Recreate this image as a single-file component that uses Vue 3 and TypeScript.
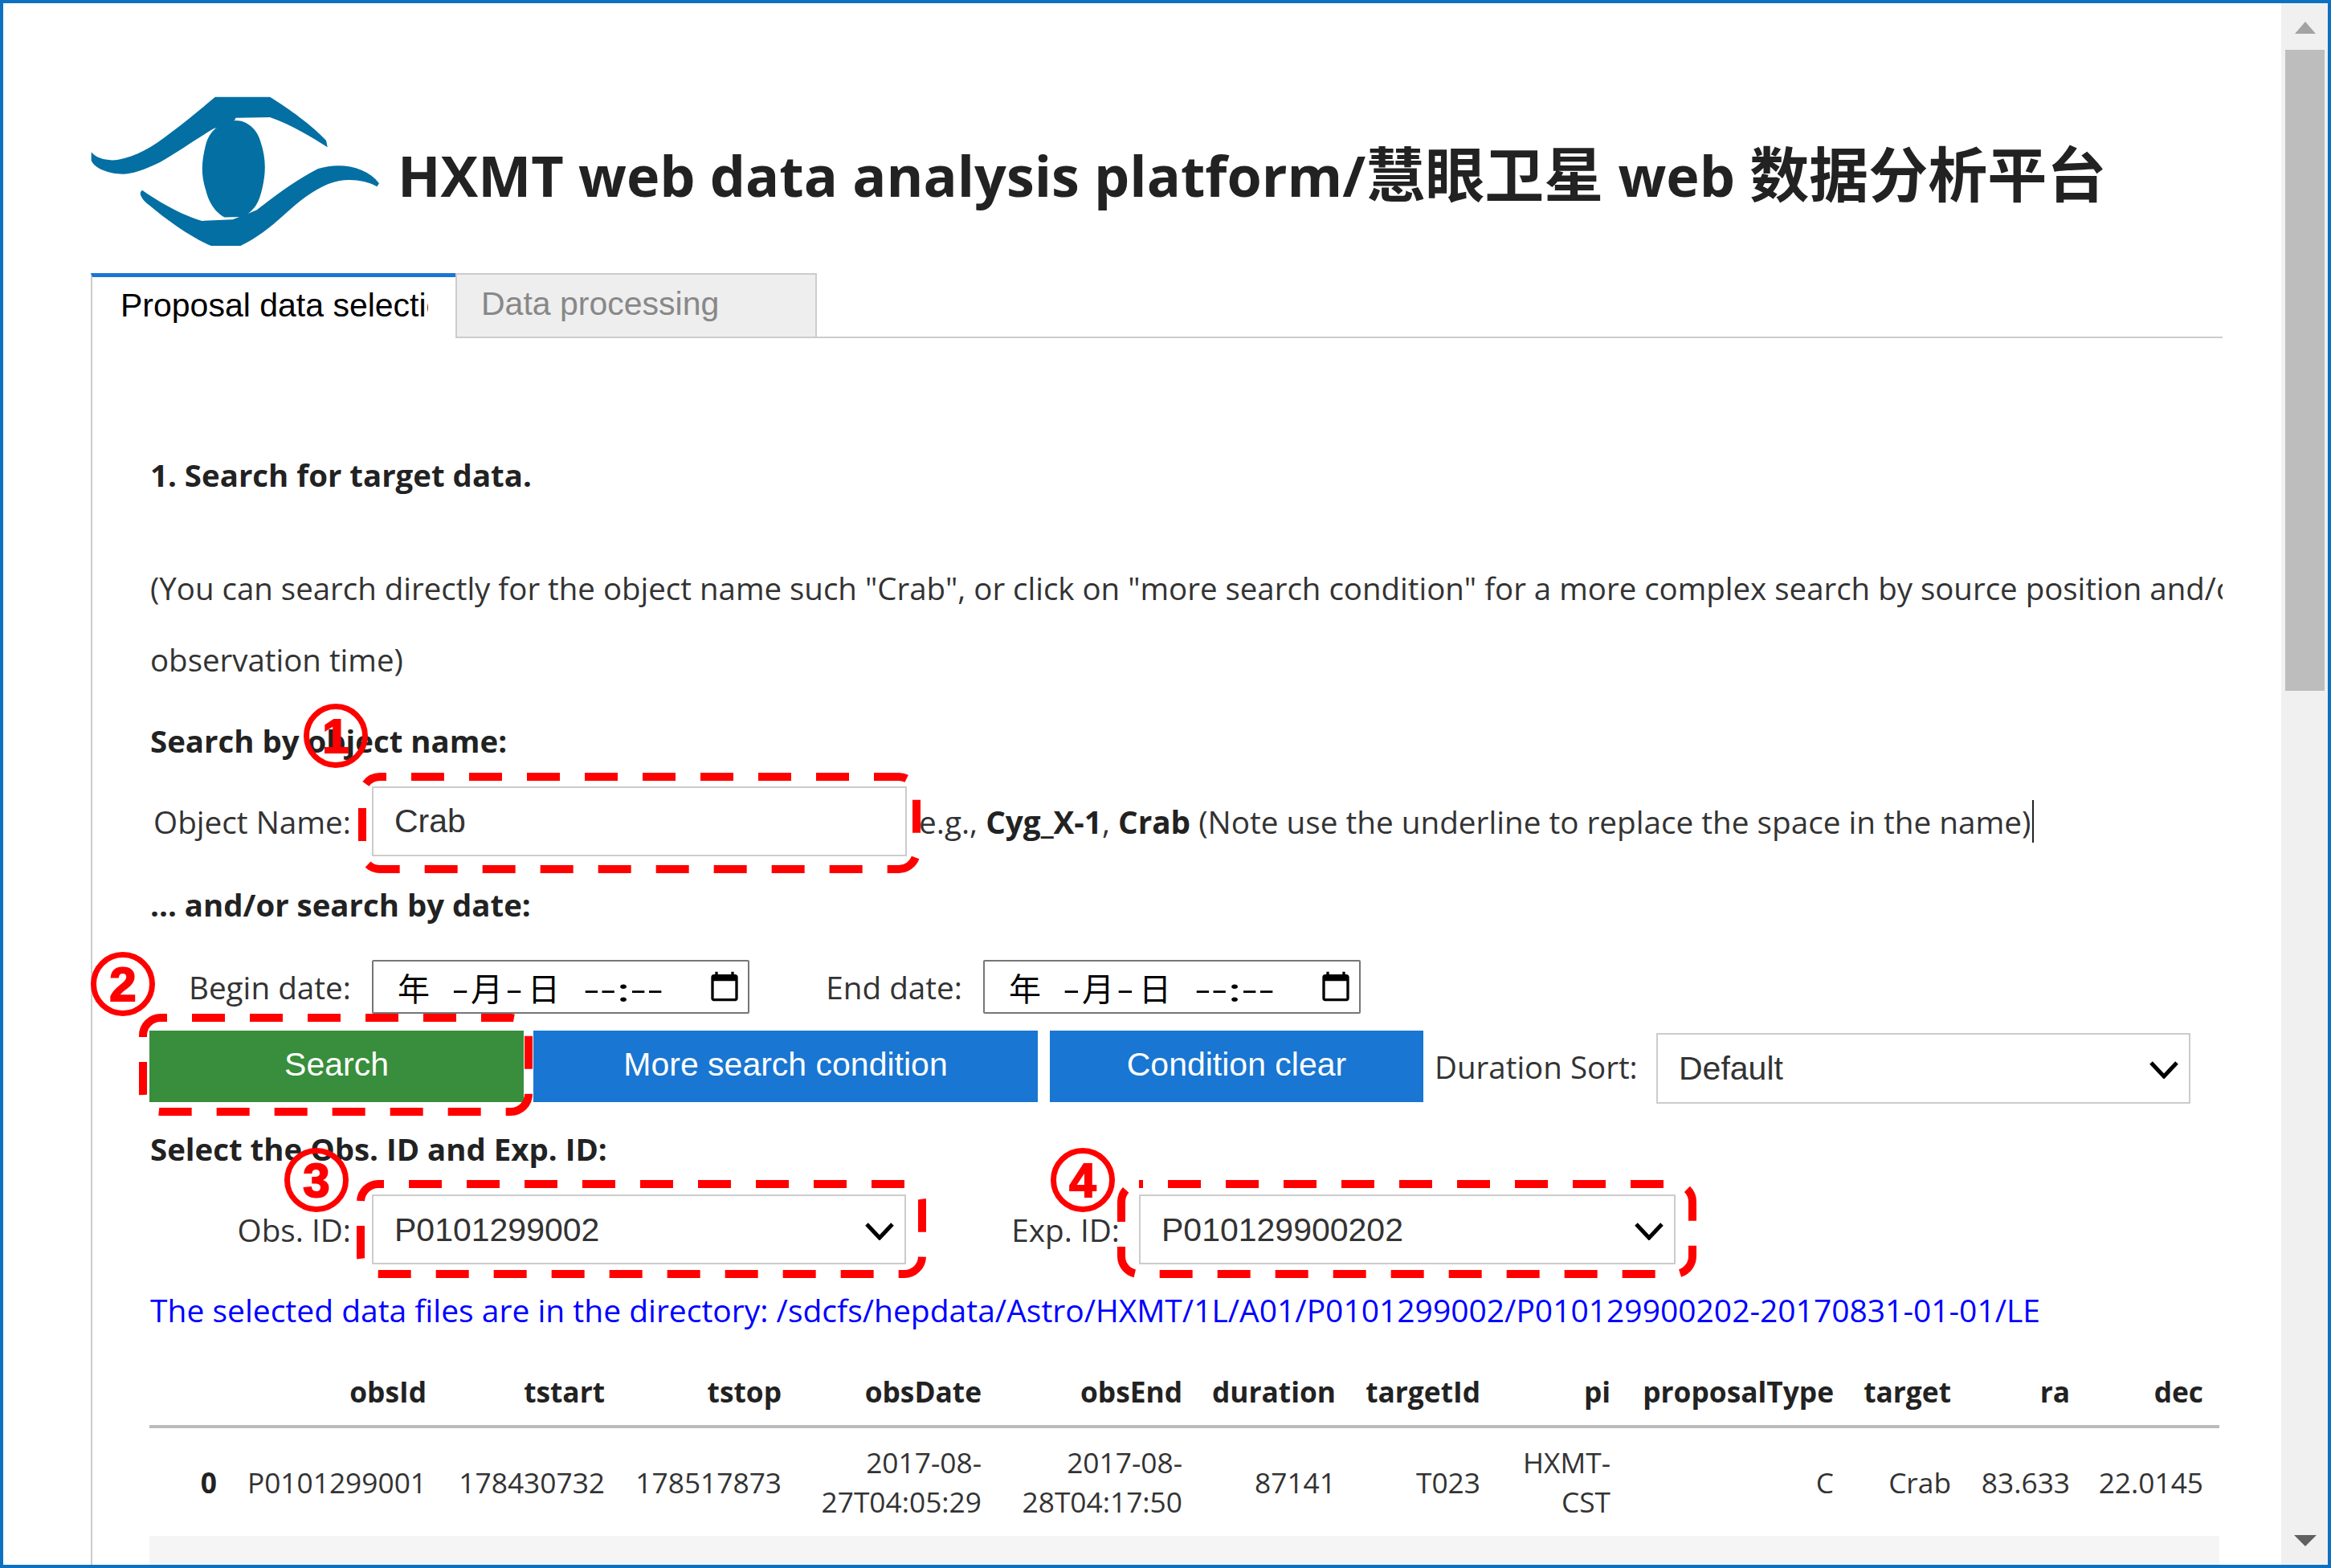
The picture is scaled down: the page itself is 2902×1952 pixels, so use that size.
<script setup lang="ts">
import { ref } from 'vue';

const objectName = ref('Crab');
const durationSort = ref('Default');
const obsId = ref('P0101299002');
const expId = ref('P010129900202');

const columns = ['', 'obsId', 'tstart', 'tstop', 'obsDate', 'obsEnd', 'duration', 'targetId', 'pi', 'proposalType', 'target', 'ra', 'dec'];
const colWidths = [104, 261, 222, 220, 249, 250, 191, 180, 162, 278, 146, 148, 166];

// only what can be read above the fold
const rows = [
  ['0', 'P0101299001', '178430732', '178517873', '2017-08-27T04:05:29', '2017-08-28T04:17:50', '87141', 'T023', 'HXMT-CST', 'C', 'Crab', '83.633', '22.0145'],
  ['', '', '', '', '2017-08-', '2017-08-', '', '', 'HXMT-', '', '', '', ''],
];

const dashBoxes = [
  { x: 451, y: 967, w: 690, h: 115, offset: 33 },
  { x: 178, y: 1267, w: 480, h: 117, offset: 33 },
  { x: 449, y: 1474, w: 699, h: 112, offset: 34 },
  { x: 1396, y: 1474, w: 711, h: 112, offset: 36 },
];

const badges = [
  { n: '1', x: 418, y: 916 },
  { n: '2', x: 153, y: 1225 },
  { n: '3', x: 394, y: 1469 },
  { n: '4', x: 1348, y: 1469 },
];
</script>

<template>
  <div class="page">
    <div class="main">
      <header class="header">
        <svg class="logo" viewBox="70 60 1078 558" width="359" height="186">
          <path d="M72 268C90 290 125 302 170 297C240 285 300 250 370 195C430 150 490 100 535 62L740 62C810 105 900 170 950 225L955 250C900 215 820 165 740 138L612 140L600 165L530 180C470 215 400 265 330 305C270 335 220 350 190 350C140 350 85 330 72 300Z" />
          <path d="M612 150C660 150 695 190 705 230C725 290 725 340 712 400C700 450 690 480 640 510L570 512C530 490 510 450 500 410C480 350 485 300 500 240C515 190 540 165 612 150Z" />
          <path d="M1148 385L1140 397C1100 375 1050 368 1000 375C930 388 860 440 790 505C740 550 690 590 630 618L520 618C450 590 350 520 275 455C255 435 250 420 262 410C320 450 400 500 485 525L600 520L640 505L690 485C760 430 840 370 920 330C1000 305 1100 320 1148 385Z" />
        </svg>
        <h1 class="title">HXMT web data analysis platform/<span class="cjk">慧眼卫星</span> web <span class="cjk">数据分析平台</span></h1>
      </header>

      <div class="tabs">
        <button class="tab active"><span class="tab-clip">Proposal data selection</span></button>
        <button class="tab">Data processing</button>
      </div>

      <section class="panel">
        <p class="heading step-title">1. Search for target data.</p>
        <p class="hint">(You can search directly for the object name such "Crab", or click on "more search condition" for a more complex search by source position and/or<br />observation time)</p>

        <p class="heading name-title">Search by object name:</p>
        <div class="row name-row">
          <label class="field-label">Object Name:</label>
          <input v-model="objectName" class="box name-input" type="text" />
          <span class="example">e.g., <b>Cyg_X-1</b>, <b>Crab</b> (Note use the underline to replace the space in the name)</span>
        </div>

        <p class="heading date-title">... and/or search by date:</p>
        <div class="row date-row">
          <label class="field-label">Begin date:</label>
          <div class="date-box">
            <span class="d-year">年</span><span class="d-dash">-</span><span class="d-month">月</span><span class="d-dash">-</span><span class="d-day">日</span><span class="d-time">--:--</span>
            <svg class="calendar" viewBox="0 0 24 24" width="40" height="40"><path d="M20 3h-1V1h-2v2H7V1H5v2H4c-1.1 0-2 .9-2 2v16c0 1.1.9 2 2 2h16c1.1 0 2-.9 2-2V5c0-1.1-.9-2-2-2zm0 18H4V8h16v13z" /></svg>
          </div>
          <label class="end-label">End date:</label>
          <div class="date-box">
            <span class="d-year">年</span><span class="d-dash">-</span><span class="d-month">月</span><span class="d-dash">-</span><span class="d-day">日</span><span class="d-time">--:--</span>
            <svg class="calendar" viewBox="0 0 24 24" width="40" height="40"><path d="M20 3h-1V1h-2v2H7V1H5v2H4c-1.1 0-2 .9-2 2v16c0 1.1.9 2 2 2h16c1.1 0 2-.9 2-2V5c0-1.1-.9-2-2-2zm0 18H4V8h16v13z" /></svg>
          </div>
        </div>

        <div class="row button-row">
          <button class="btn green search-btn">Search</button>
          <button class="btn blue more-btn">More search condition</button>
          <button class="btn blue clear-btn">Condition clear</button>
          <label class="sort-label">Duration Sort:</label>
          <div class="select-wrap sort-select">
            <select v-model="durationSort" class="box"><option>Default</option></select>
            <svg class="chevron" viewBox="0 0 36 22" width="36" height="22"><path d="M2 2L18 19L34 2" /></svg>
          </div>
        </div>

        <p class="heading select-title">Select the Obs. ID and Exp. ID:</p>
        <div class="row select-row">
          <label class="field-label">Obs. ID:</label>
          <div class="select-wrap obs-select">
            <select v-model="obsId" class="box"><option>P0101299002</option></select>
            <svg class="chevron" viewBox="0 0 36 22" width="36" height="22"><path d="M2 2L18 19L34 2" /></svg>
          </div>
          <label class="exp-label">Exp. ID:</label>
          <div class="select-wrap exp-select">
            <select v-model="expId" class="box"><option>P010129900202</option></select>
            <svg class="chevron" viewBox="0 0 36 22" width="36" height="22"><path d="M2 2L18 19L34 2" /></svg>
          </div>
        </div>

        <p class="directory">The selected data files are in the directory: /sdcfs/hepdata/Astro/HXMT/1L/A01/P0101299002/P010129900202-20170831-01-01/LE</p>

        <table class="data-table">
          <colgroup>
            <col v-for="(w, i) in colWidths" :key="i" :style="{ width: w + 'px' }" />
          </colgroup>
          <thead>
            <tr><th v-for="c in columns" :key="c">{{ c }}</th></tr>
          </thead>
          <tbody>
            <tr v-for="(row, r) in rows" :key="r">
              <td v-for="(cell, i) in row" :key="i" :class="{ 'row-index': i === 0 }">{{ cell }}</td>
            </tr>
          </tbody>
        </table>
      </section>
    </div>

    <aside class="scrollbar">
      <span class="arrow-up"></span>
      <span class="thumb"></span>
      <span class="arrow-down"></span>
    </aside>

    <!-- red callouts drawn on top of the page -->
    <svg class="callouts" viewBox="0 0 2902 1952" width="2902" height="1952">
      <rect
        v-for="(b, i) in dashBoxes"
        :key="i"
        :x="b.x"
        :y="b.y"
        :width="b.w"
        :height="b.h"
        :stroke-dashoffset="b.offset"
        rx="22"
        class="dash-box"
      />
      <g v-for="b in badges" :key="b.n">
        <circle :cx="b.x" :cy="b.y" r="36.5" class="badge-ring" />
        <text :x="b.x" :y="b.y + 21" class="badge-num">{{ b.n }}</text>
      </g>
    </svg>
  </div>
</template>

<style scoped>
* {
  box-sizing: border-box;
}

.page {
  position: relative;
  display: flex;
  width: 2902px;
  height: 1952px;
  overflow: hidden;
  background: #fff;
  border: 4px solid #0e70c0;
  font-family: "Open Sans", "Noto Sans CJK SC", sans-serif;
  font-size: 38.7px;
  color: #333;
}

.main {
  width: 2835px;
  flex-shrink: 0;
  padding: 116px 0 0 109px;
}

.header {
  display: flex;
  align-items: center;
  height: 186px;
  margin-bottom: 34px;
}

.logo {
  flex-shrink: 0;
  fill: #046fa3;
}

.title {
  margin: 0 0 0 23px;
  font-size: 70px;
  font-weight: 700;
  color: #222;
  white-space: nowrap;
}

.cjk {
  font-size: 74px;
}

/* tabs */
.tabs {
  display: flex;
  width: 2654px;
  height: 81px;
  border-bottom: 2px solid #ccc;
}

.tab {
  width: 450px;
  height: 81px;
  padding: 0 0 4px 30px;
  text-align: left;
  font-family: "Liberation Sans", Arial, sans-serif;
  font-size: 41px;
  color: #888;
  background: #eee;
  border: 2px solid #ccc;
}

.tab.active {
  width: 454px;
  padding: 0 0 6px 35px;
  color: #000;
  background: #fff;
  border: 0;
  border-top: 5px solid #1976d2;
  border-left: 2px solid #ccc;
  margin-bottom: -2px;
}

.tab-clip {
  display: block;
  width: 383px;
  overflow: hidden;
  white-space: nowrap;
}

/* panel */
.panel {
  width: 2654px;
  height: 1530px;
  padding-left: 72px;
  overflow: hidden;
  border-left: 2px solid #ccc;
}

p {
  margin: 0;
}

.heading {
  line-height: 60px;
  font-size: 38.4px;
  font-weight: 700;
  color: #222;
}

.step-title {
  margin-top: 140px;
}

.hint {
  margin-top: 67px;
  font-size: 38.45px;
  line-height: 89px;
  white-space: nowrap;
}

.name-title {
  margin-top: 26px;
}

.date-title {
  margin-top: 30px;
}

.select-title {
  margin-top: 26px;
}

.row {
  display: flex;
  align-items: center;
}

.name-row {
  height: 87px;
  margin-top: 27px;
}

.date-row {
  height: 67px;
  margin-top: 39px;
}

.button-row {
  align-items: flex-start;
  height: 91px;
  margin-top: 21px;
}

.select-row {
  height: 87px;
  margin-top: 27px;
}

.field-label {
  flex-shrink: 0;
  width: 250px;
  margin-right: 26px;
  text-align: right;
}

.box {
  width: 100%;
  height: 100%;
  padding: 0 0 0 26px;
  font-family: "Liberation Sans", Arial, sans-serif;
  font-size: 41px;
  color: #333;
  background: #fff;
  border: 2px solid #ccc;
  border-radius: 0;
  outline: none;
  appearance: none;
}

.name-input {
  flex-shrink: 0;
  width: 666px;
}

.example {
  display: flex;
  align-items: center;
  height: 53px;
  margin-left: 15px;
  padding-right: 1px;
  white-space: pre-wrap;
  border-right: 2px solid #222;
}

.example b {
  color: #222;
}

/* date inputs */
.date-box {
  position: relative;
  display: flex;
  align-items: center;
  flex-shrink: 0;
  width: 470px;
  height: 67px;
  padding-left: 30px;
  font-family: "Noto Sans CJK SC", sans-serif;
  font-size: 40px;
  color: #000;
  border: 2px solid #767676;
  border-radius: 2px;
}

.d-year {
  margin-right: 25px;
}

.d-dash {
  display: inline-block;
  width: 26px;
  text-align: center;
  transform: scaleX(1.6);
}

.d-month {
  margin-right: 1px;
}

.d-day {
  margin-left: 4px;
  margin-right: 29px;
}

.d-time {
  display: inline-block;
  transform: scaleX(1.5);
  transform-origin: left center;
}

.calendar {
  position: absolute;
  right: 9px;
  top: 11px;
  fill: #000;
}

.end-label {
  flex-shrink: 0;
  width: 265px;
  margin-right: 26px;
  text-align: right;
}

/* buttons */
.btn {
  height: 89px;
  padding: 0 0 4px;
  font-family: "Liberation Sans", Arial, sans-serif;
  font-size: 41px;
  color: #fff;
  border: 0;
}

.green {
  background: #388e3c;
}

.blue {
  background: #1976d2;
}

.search-btn {
  width: 466px;
  margin-left: -1px;
}

.more-btn {
  width: 628px;
  margin-left: 12px;
}

.clear-btn {
  width: 465px;
  margin-left: 15px;
}

.sort-label {
  width: 276px;
  margin-left: 14px;
  font-size: 38.5px;
  line-height: 91px;
  white-space: nowrap;
}

.select-wrap {
  position: relative;
  flex-shrink: 0;
  height: 87px;
}

.chevron {
  position: absolute;
  right: 15px;
  top: 35px;
  fill: none;
  stroke: #000;
  stroke-width: 5;
  pointer-events: none;
}

.sort-select {
  width: 665px;
  height: 88px;
  margin-top: 3px;
}

.obs-select {
  width: 665px;
}

.exp-select {
  width: 668px;
}

.exp-label {
  flex-shrink: 0;
  width: 266px;
  margin-right: 24px;
  text-align: right;
}

.directory {
  margin-top: 27px;
  font-size: 39px;
  line-height: 60px;
  color: #00f;
  white-space: nowrap;
}

/* table */
.data-table {
  width: 2577px;
  margin-top: 28px;
  margin-left: -1px;
  table-layout: fixed;
  border-collapse: collapse;
  font-size: 35.3px;
}

.data-table th {
  height: 87px;
  padding: 0 20px 0 0;
  text-align: right;
  font-weight: 700;
  color: #222;
  white-space: nowrap;
  border-bottom: 4px solid #bbb;
}

.data-table td {
  height: 136px;
  padding: 0 20px 0 0;
  text-align: right;
  line-height: 49px;
}

.data-table tbody tr:nth-child(2) {
  background: #f5f5f5;
}

.row-index {
  font-weight: 700;
  color: #222;
}

/* scrollbar */
.scrollbar {
  display: flex;
  flex-direction: column;
  align-items: center;
  flex-shrink: 0;
  width: 59px;
  height: 1944px;
  background: #f0f0f0;
  margin-left: 1px;
}

.arrow-up {
  width: 0;
  height: 0;
  margin-top: 23px;
  border-left: 13px solid transparent;
  border-right: 13px solid transparent;
  border-bottom: 15px solid #a3a3a3;
}

.thumb {
  width: 49px;
  height: 798px;
  margin-top: 20px;
  background: #bdbdbd;
}

.arrow-down {
  width: 0;
  height: 0;
  margin-top: 1051px;
  border-left: 14px solid transparent;
  border-right: 14px solid transparent;
  border-top: 14px solid #606060;
}

/* callouts */
.callouts {
  position: absolute;
  left: -4px;
  top: -4px;
  pointer-events: none;
}

.dash-box {
  fill: none;
  stroke: #f00;
  stroke-width: 10;
  stroke-dasharray: 41 31;
}

.badge-ring {
  fill: none;
  stroke: #f00;
  stroke-width: 7;
}

.badge-num {
  fill: #f00;
  stroke: #f00;
  stroke-width: 2;
  font-family: "Liberation Sans", Arial, sans-serif;
  font-size: 60px;
  font-weight: 700;
  text-anchor: middle;
}
</style>

<style>
html,
body {
  margin: 0;
  overflow: hidden;
  background: #fff;
}
</style>
